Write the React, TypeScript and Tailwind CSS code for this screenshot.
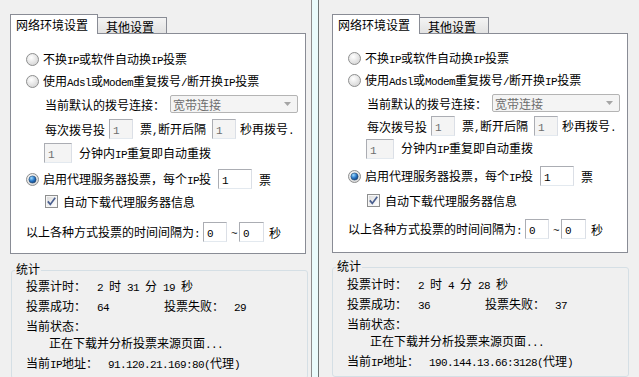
import React from "react";

const CJK = "font-['Noto_Sans_CJK_SC',sans-serif] text-[12px]";
const ASC = "font-['Liberation_Mono',monospace] text-[11px] tracking-[-0.6px] whitespace-pre";

function T({ s }: { s: string }) {
  const parts = s.match(/[\x20-\x7e]+|[^\x20-\x7e]+/g) || [];
  return (
    <>
      {parts.map((p, i) =>
        /^[\x20-\x7e]/.test(p) ? (
          <span key={i} className={ASC}>
            {p}
          </span>
        ) : (
          <span key={i} className={CJK}>
            {p}
          </span>
        )
      )}
    </>
  );
}

function Radio({ on, id }: { on?: boolean; id: string }) {
  return (
    <svg width="13" height="13" viewBox="0 0 13 13" className="shrink-0">
      <defs>
        <radialGradient id={`rg${id}`} cx="0.4" cy="0.35" r="0.7">
          <stop offset="0" stopColor="#ffffff" />
          <stop offset="1" stopColor="#d4d4d4" />
        </radialGradient>
        <radialGradient id={`rb${id}`} cx="0.35" cy="0.3" r="0.75">
          <stop offset="0" stopColor="#9fdcff" />
          <stop offset="0.55" stopColor="#2a78c8" />
          <stop offset="1" stopColor="#0d3f7c" />
        </radialGradient>
      </defs>
      <circle cx="6.5" cy="6.5" r="6" fill={`url(#rg${id})`} stroke="#8e8f8f" strokeWidth="1" />
      {on && <circle cx="6.5" cy="6.5" r="3.6" fill={`url(#rb${id})`} stroke="#27496f" strokeWidth="0.6" />}
    </svg>
  );
}

function Check({ id }: { id: string }) {
  return (
    <svg width="13" height="13" viewBox="0 0 13 13" className="shrink-0">
      <defs>
        <linearGradient id={`cg${id}`} x1="0" y1="0" x2="1" y2="1">
          <stop offset="0" stopColor="#dcdcdc" />
          <stop offset="1" stopColor="#ffffff" />
        </linearGradient>
      </defs>
      <rect x="0.5" y="0.5" width="12" height="12" fill="#f6f6f6" stroke="#8e8f8f" />
      <rect x="2" y="2" width="9" height="9" fill={`url(#cg${id})`} />
      <path d="M2.8 6.4 L5.3 9.4 L10.2 2.8" stroke="#4a5f8f" strokeWidth="1.7" fill="none" />
    </svg>
  );
}

function Input({ v, w, disabled }: { v: string; w: string; disabled?: boolean }) {
  return (
    <div
      className={`${w} h-[20px] shrink-0 border border-t-[#abadb3] border-l-[#abadb3] border-r-[#dbdfe6] border-b-[#e3e9ef] pl-[3px] pt-[1px] leading-[14px] ${
        disabled ? "bg-[#f4f4f4] text-[#6d6d6d]" : "bg-white text-black"
      }`}
    >
      <T s={v} />
    </div>
  );
}

type Data = { time: string; ok: string; fail: string; ip: string };

function Window({ v, d }: { v: "L" | "R"; d: Data }) {
  const L = v === "L";
  return (
    <div className={L ? "pl-[10px] pt-[14px]" : "pl-[13px] pt-[14px]"}>
      {/* tabs */}
      <div className="flex items-end h-[19px]">
        <div className="relative z-10 w-[88px] h-[20px] -mb-px bg-white border border-b-0 border-[#898c95] pl-[5px] pt-[2px] leading-[14px] text-black">
          <T s="网络环境设置" />
        </div>
        <div className="w-[69px] h-[16px] border border-l-0 border-b-0 border-[#898c95] bg-gradient-to-b from-[#f4f4f4] to-[#e2e2e2] pl-[8px] pt-[1px] leading-[14px] text-black">
          <T s="其他设置" />
        </div>
      </div>
      {/* panel */}
      <div
        className={`w-[296px] border border-[#898c95] bg-white text-black leading-[14px] ${
          L ? "h-[221px] pt-[15px]" : "h-[220px] pt-[14px]"
        }`}
      >
        <div className="flex items-center h-[21px] pl-[15px] gap-[4px]">
          <Radio id={`${v}1`} />
          <div>
            <T s="不换IP或软件自动换IP投票" />
          </div>
        </div>
        <div className={`flex items-center pl-[15px] gap-[4px] ${L ? "h-[22px]" : "h-[23px]"}`}>
          <Radio id={`${v}2`} />
          <div>
            <T s="使用Adsl或Modem重复拨号/断开换IP投票" />
          </div>
        </div>
        <div className={`flex items-center pl-[34px] ${L ? "h-[24px]" : "h-[22px]"}`}>
          <div>
            <T s="当前默认的拨号连接：" />
          </div>
          <div className="ml-[5px] w-[128px] h-[18px] rounded-[2px] border border-[#b4b4b4] bg-[#f4f4f4] flex items-center pl-[2px] text-[#6d6d6d]">
            <div className="flex-1">
              <T s="宽带连接" />
            </div>
            <svg width="7" height="4" viewBox="0 0 7 4" className="mr-[6px]">
              <path d="M0 0 H7 L3.5 4 Z" fill="#a5a5a5" />
            </svg>
          </div>
        </div>
        <div className={`flex items-center pl-[34px] ${L ? "h-[26px]" : "h-[24px]"}`}>
          <div>
            <T s="每次拨号投" />
          </div>
          <div className="ml-[4px]">
            <Input v="1" w="w-[24px]" disabled />
          </div>
          <div className="ml-[7px]">
            <T s="票,断开后隔" />
          </div>
          <div className="ml-[6px]">
            <Input v="1" w="w-[24px]" disabled />
          </div>
          <div className="ml-[4px]">
            <T s="秒再拨号." />
          </div>
        </div>
        <div className={`flex items-center pl-[33px] ${L ? "h-[22px]" : "h-[21px]"}`}>
          <Input v="1" w="w-[28px]" disabled />
          <div className="ml-[7px]">
            <T s="分钟内IP重复即自动重拨" />
          </div>
        </div>
        <div className={`flex items-center pl-[15px] gap-[4px] ${L ? "h-[30px]" : "h-[34px]"}`}>
          <Radio id={`${v}3`} on />
          <div>
            <T s="启用代理服务器投票，每个IP投" />
          </div>
          <div className="ml-[3px]">
            <Input v="1" w="w-[34px]" />
          </div>
          <div className="ml-[3px]">
            <T s="票" />
          </div>
        </div>
        <div className={`flex items-center pl-[34px] gap-[5px] ${L ? "h-[15px]" : "h-[14px]"}`}>
          <Check id={v} />
          <div>
            <T s="自动下载代理服务器信息" />
          </div>
        </div>
        <div className={`flex items-center pl-[15px] mt-[12px] ${L ? "h-[22px]" : "h-[20px]"}`}>
          <div>
            <T s="以上各种方式投票的时间间隔为:" />
          </div>
          <div className="ml-[3px]">
            <Input v="0" w="w-[24px]" />
          </div>
          <div className="ml-[4px]">
            <T s="~" />
          </div>
          <div className="ml-[2px]">
            <Input v="0" w="w-[25px]" />
          </div>
          <div className="ml-[5px]">
            <T s="秒" />
          </div>
        </div>
      </div>
      {/* stats */}
      <div
        className={`relative w-[297px] rounded-[3px] border border-[#d5dfe5] pl-[14px] text-black leading-[17px] ${
          L ? "ml-[1px] mt-[16px] pt-[6px] pb-[4px]" : "mt-[14px] pt-[7px] pb-[4px]"
        }`}
      >
        <div className="absolute left-[3px] top-[-10px] px-[1px] bg-[#f0f0f0] leading-[14px]">
          <T s="统计" />
        </div>
        <div className="flex">
          <div className="w-[71px]">
            <T s="投票计时：" />
          </div>
          <div>
            <T s={d.time} />
          </div>
        </div>
        <div className="flex">
          <div className="w-[71px]">
            <T s="投票成功：" />
          </div>
          <div className="w-[67px]">
            <T s={d.ok} />
          </div>
          <div className="w-[70px]">
            <T s="投票失败：" />
          </div>
          <div>
            <T s={d.fail} />
          </div>
        </div>
        <div>
          <T s="当前状态：" />
        </div>
        <div className="pl-[23px]">
          <T s="正在下载并分析投票来源页面..." />
        </div>
        <div className="flex">
          <div className="w-[82px]">
            <T s="当前IP地址：" />
          </div>
          <div>
            <T s={d.ip} />
          </div>
        </div>
      </div>
      <div className={`leading-[14px] text-black ${L ? "mt-[5px] -ml-[1px]" : "mt-[7px]"}`}>
        <T s="0.4" />
      </div>
    </div>
  );
}

export default function App() {
  return (
    <div className="w-[639px] h-[377px] overflow-hidden flex bg-[#f0f0f0]">
      <div className="w-[312px] h-full shrink-0 bg-[#f0f0f0] border-r border-[#8c8c8c] overflow-hidden">
        <Window v="L" d={{ time: "2 时 31 分 19 秒", ok: "64", fail: "29", ip: "91.120.21.169:80(代理)" }} />
      </div>
      <div className="w-[6px] h-full shrink-0 bg-[#eafbfb]" />
      <div className="flex-1 h-full bg-[#f0f0f0] border-l border-[#6f7676] overflow-hidden">
        <Window v="R" d={{ time: "2 时 4 分 28 秒", ok: "36", fail: "37", ip: "190.144.13.66:3128(代理)" }} />
      </div>
    </div>
  );
}
